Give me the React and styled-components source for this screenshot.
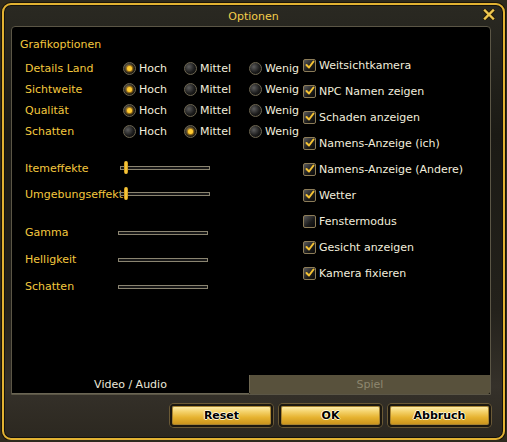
import React from 'react';
import styled, { createGlobalStyle } from 'styled-components';

const GlobalStyle = createGlobalStyle`
  html, body {
    margin: 0;
    padding: 0;
    background: #2e2a1e;
    font-family: "DejaVu Sans", "Liberation Sans", sans-serif;
    font-size: 11px;
  }
`;

const Window = styled.div`
  box-sizing: border-box;
  margin: 3px 2px 0 2px;
  width: 503px;
  height: 437px;
  border: 2px solid #e2b232;
  border-radius: 9px;
  background: linear-gradient(180deg, #2a2922 0%, #1b1a15 30%, #23211b 70%, #35312a 88%, #2c2820 100%);
  box-shadow: inset 0 0 0 1px #14120c, 0 0 0 1px #1a1408;
  display: flex;
  flex-direction: column;
  position: relative;
`;

const TitleBar = styled.div`
  height: 21px;
  display: flex;
  align-items: center;
  justify-content: center;
  padding-top: 2px;
  box-sizing: border-box;
  color: #f4cd4a;
  font-size: 11px;
`;

const Close = styled.div`
  position: absolute;
  top: 4px;
  right: 8px;
  width: 12px;
  height: 11px;
`;

const Panel = styled.div`
  box-sizing: border-box;
  margin: 0 12px 0 7px;
  height: 369px;
  border: 1px solid #5b5646;
  border-radius: 4px 4px 0 0;
  background: #000;
  display: flex;
  flex-direction: column;
`;

const Content = styled.div`
  flex: 1;
  display: flex;
  padding: 11px 0 0 8px;
`;

const LeftCol = styled.div`
  width: 283px;
  display: flex;
  flex-direction: column;
`;

const RightCol = styled.div`
  display: flex;
  flex-direction: column;
  padding-top: 14px;
`;

const Heading = styled.div`
  color: #f4c83e;
  height: 14px;
  line-height: 14px;
`;

const RadioRow = styled.div`
  display: grid;
  grid-template-columns: 98px 61px 65px 1fr;
  align-items: center;
  height: 21px;
  padding-left: 5px;
  margin-top: ${({ first }) => (first ? '6px' : '0')};
`;

const Label = styled.span`
  color: #f4c83e;
  white-space: nowrap;
`;

const Option = styled.label`
  display: flex;
  align-items: center;
  gap: 3px;
  color: #f2eedd;
  white-space: nowrap;
`;

const Radio = styled.span`
  box-sizing: border-box;
  width: 13px;
  height: 13px;
  border-radius: 50%;
  border: 1px solid #6e6752;
  background: radial-gradient(circle at 35% 35%, #5c5c5c 0%, #1c1c1c 55%, #050505 100%);
  display: flex;
  align-items: center;
  justify-content: center;
  &::after {
    content: '';
    display: ${({ on }) => (on ? 'block' : 'none')};
    width: 5px;
    height: 5px;
    border-radius: 50%;
    background: #ffcc33;
    box-shadow: 0 0 2px 1px #c98e10;
  }
`;

const SliderRow = styled.div`
  display: grid;
  grid-template-columns: ${({ track }) => track}px 90px;
  align-items: center;
  height: ${({ h }) => h}px;
  padding-left: 5px;
  margin-top: ${({ mt }) => mt || 0}px;
`;

const Track = styled.div`
  position: relative;
  box-sizing: border-box;
  height: 4px;
  border: 1px solid #8a8470;
  background: #161616;
`;

const Knob = styled.span`
  position: absolute;
  left: 3px;
  top: -6px;
  width: 4px;
  height: 13px;
  border-radius: 2px;
  background: linear-gradient(90deg, #c88a10, #ffd84a 50%, #c88a10);
`;

const CheckRow = styled.label`
  display: flex;
  align-items: center;
  gap: 3px;
  height: ${({ h }) => h || 26}px;
  color: #f2eedd;
  white-space: nowrap;
`;

const Box = styled.span`
  box-sizing: border-box;
  width: 13px;
  height: 13px;
  border: 1px solid #8c7c58;
  border-radius: 2px;
  background: linear-gradient(135deg, #5a5a5a 0%, #1a1a1a 60%, #0a0a0a 100%);
  display: flex;
  align-items: center;
  justify-content: center;
`;

const Tabs = styled.div`
  display: flex;
  height: 18px;
`;

const Tab = styled.div`
  box-sizing: border-box;
  display: flex;
  align-items: center;
  justify-content: center;
  ${({ active }) =>
    active
      ? `
    width: 237px;
    background: #000;
    color: #ece8da;
    border-bottom: 1px solid #6a6554;
  `
      : `
    flex: 1;
    margin-top: -1px;
    height: 19px;
    background: #58513c;
    color: #8e876f;
    border-left: 1px solid #6f6852;
    border-radius: 0 0 2px 2px;
  `}
`;

const ButtonRow = styled.div`
  display: flex;
  justify-content: flex-end;
  gap: 6px;
  margin: 9px 12px 0 0;
`;

const Button = styled.button`
  box-sizing: border-box;
  width: 103px;
  height: 23px;
  border: 2px solid #1c1810;
  border-radius: 4px;
  background: linear-gradient(180deg, #fff1b4 0%, #f4d26a 30%, #e6b330 60%, #c8901a 100%);
  box-shadow: 0 0 0 1px #6b5a36, inset 0 0 0 1px #a88432;
  font-family: "DejaVu Sans", "Liberation Sans", sans-serif;
  font-size: 11px;
  font-weight: bold;
  color: #000;
  text-shadow: 1px 0 #fff6d6, -1px 0 #fff6d6, 0 1px #fff6d6, 0 -1px #fff6d6;
  padding: 0;
`;

const Check = () => (
  <svg width="10" height="10" viewBox="0 0 10 10">
    <path d="M1.5 5 L4 7.5 L8.5 1.5" fill="none" stroke="#f4c233" strokeWidth="2" strokeLinecap="round" strokeLinejoin="round" />
  </svg>
);

const radios = [
  ['Details Land', 0],
  ['Sichtweite', 0],
  ['Qualität', 0],
  ['Schatten', 1],
];

const checks = [
  ['Weitsichtkamera', true],
  ['NPC Namen zeigen', true],
  ['Schaden anzeigen', true],
  ['Namens-Anzeige (ich)', true],
  ['Namens-Anzeige (Andere)', true],
  ['Wetter', true],
  ['Fenstermodus', false],
  ['Gesicht anzeigen', true],
  ['Kamera fixieren', true],
];

export default function App() {
  return (
    <>
      <GlobalStyle />
      <Window>
        <TitleBar>Optionen</TitleBar>
        <Close>
          <svg width="12" height="11" viewBox="0 0 12 11">
            <path d="M2 1.5 L10 9.5 M10 1.5 L2 9.5" stroke="#2a1e08" strokeWidth="4.5" strokeLinecap="square" />
            <path d="M2 1.5 L10 9.5 M10 1.5 L2 9.5" stroke="#f0c850" strokeWidth="2.4" strokeLinecap="square" />
          </svg>
        </Close>
        <Panel>
          <Content>
            <LeftCol>
              <Heading>Grafikoptionen</Heading>
              {radios.map(([name, sel], i) => (
                <RadioRow key={name} first={i === 0}>
                  <Label>{name}</Label>
                  {['Hoch', 'Mittel', 'Wenig'].map((opt, j) => (
                    <Option key={opt}>
                      <Radio on={sel === j} />
                      {opt}
                    </Option>
                  ))}
                </RadioRow>
              ))}
              <SliderRow track={95} h={26} mt={13}>
                <Label>Itemeffekte</Label>
                <Track><Knob /></Track>
              </SliderRow>
              <SliderRow track={95} h={26}>
                <Label>Umgebungseffekt</Label>
                <Track><Knob /></Track>
              </SliderRow>
              <SliderRow track={93} h={27} mt={12}>
                <Label>Gamma</Label>
                <Track />
              </SliderRow>
              <SliderRow track={93} h={27}>
                <Label>Helligkeit</Label>
                <Track />
              </SliderRow>
              <SliderRow track={93} h={27}>
                <Label>Schatten</Label>
                <Track />
              </SliderRow>
            </LeftCol>
            <RightCol>
              {checks.map(([name, on]) => (
                <CheckRow key={name}>
                  <Box>{on && <Check />}</Box>
                  {name}
                </CheckRow>
              ))}
            </RightCol>
          </Content>
          <Tabs>
            <Tab active>Video / Audio</Tab>
            <Tab>Spiel</Tab>
          </Tabs>
        </Panel>
        <ButtonRow>
          <Button>Reset</Button>
          <Button>OK</Button>
          <Button>Abbruch</Button>
        </ButtonRow>
      </Window>
    </>
  );
}
